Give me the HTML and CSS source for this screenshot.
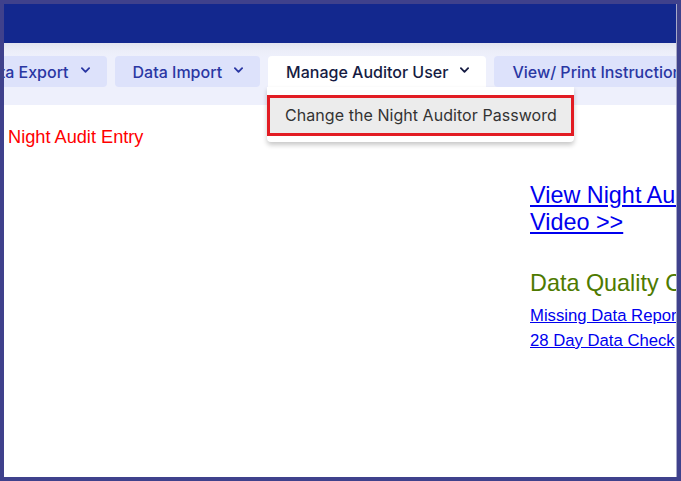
FILE: index.html
```html
<!DOCTYPE html>
<html>
<head>
<meta charset="utf-8">
<link rel="stylesheet" href="styles.css">
</head>
<body>
<div class="frame">
  <div class="page">
    <header class="topbar"></header>
    <nav class="nav">
      <div class="nav-row">
        <div class="nav-btn">Data Export <svg class="chev" viewBox="0 0 10 6"><path d="M1 1l4 4 4-4" /></svg></div>
        <div class="nav-btn">Data Import <svg class="chev" viewBox="0 0 10 6"><path d="M1 1l4 4 4-4" /></svg></div>
        <div class="nav-btn active">Manage Auditor User <svg class="chev" viewBox="0 0 10 6"><path d="M1 1l4 4 4-4" /></svg>
          <div class="dropdown">
            <div class="dd-item">Change the Night Auditor Password</div>
          </div>
        </div>
        <div class="nav-btn">View/ Print Instructions <svg class="chev" viewBox="0 0 10 6"><path d="M1 1l4 4 4-4" /></svg></div>
      </div>
    </nav>
    <main class="content">
      <div class="left">
        <div class="entry-title">Night Audit Entry</div>
      </div>
      <div class="right">
        <a class="video-link" href="#">View Night Audit Training<br>Video &gt;&gt;</a>
        <h2 class="dq-title">Data Quality Checks</h2>
        <a class="dq-link" href="#">Missing Data Report</a>
        <a class="dq-link" href="#">28 Day Data Check</a>
      </div>
    </main>
  </div>
</div>
</body>
</html>
```
FILE: styles.css
```css
html, body {
  margin: 0;
  padding: 0;
}
body {
  width: 681px;
  height: 481px;
  overflow: hidden;
  font-family: "Liberation Sans", Arial, sans-serif;
}
.frame {
  box-sizing: border-box;
  width: 681px;
  height: 481px;
  border: 4px solid #3f418c;
  background: #ffffff;
  overflow: hidden;
}
.page {
  height: 100%;
  border-right: 1px solid #a8a9c8;
  overflow: hidden;
  display: flex;
  flex-direction: column;
}
.topbar {
  height: 39px;
  flex-shrink: 0;
  background: #13288e;
}
.nav {
  height: 62px;
  flex-shrink: 0;
  background: linear-gradient(#e2e4ef 0, #eceef9 8px, #eef0fc 14px);
  position: relative;
  z-index: 2;
}
.nav-row {
  display: flex;
  gap: 8px;
  padding-top: 13px;
  margin-left: -43px;
  white-space: nowrap;
}
.nav-btn {
  position: relative;
  flex-shrink: 0;
  display: flex;
  align-items: center;
  gap: 12px;
  height: 31px;
  padding: 0 17px 0 18px;
  border-radius: 4px;
  background: #dde2fb;
  color: #2a37a3;
  font-family: Inter, "Noto Sans", sans-serif;
  font-size: 16px;
  font-weight: 500;
}
.nav-btn.active {
  background: #ffffff;
  color: #151b42;
  border-radius: 4px 4px 0 0;
}
.chev {
  width: 9px;
  height: 6px;
  fill: none;
  stroke: currentColor;
  stroke-width: 2;
  stroke-linecap: round;
  stroke-linejoin: round;
  margin-top: -3px;
}
.dropdown {
  position: absolute;
  top: 31px;
  left: -1px;
  width: 307px;
  padding: 8px 0 6px;
  background: #ffffff;
  border-radius: 0 0 4px 4px;
  box-shadow: 0 3px 5px rgba(0, 0, 0, 0.22);
}
.dd-item {
  height: 35px;
  line-height: 35px;
  padding: 0 15px;
  border: 3px solid #e21c23;
  background: #ececec;
  color: #333333;
  font-weight: 400;
  font-size: 16px;
  letter-spacing: 0.05px;
}
.content {
  flex: 1;
  display: flex;
  background: #ffffff;
}
.left {
  width: 522px;
  flex-shrink: 0;
  padding-left: 4px;
  padding-top: 22px;
}
.entry-title {
  color: #ff0000;
  font-size: 18.2px;
}
.right {
  flex-shrink: 0;
  padding-top: 77px;
  white-space: nowrap;
  display: flex;
  flex-direction: column;
  align-items: flex-start;
}
.video-link {
  color: #0000ee;
  font-size: 23.4px;
  line-height: 27px;
}
.dq-title {
  margin: 35px 0 8px;
  color: #4e7a00;
  font-size: 23.4px;
  font-weight: 400;
  line-height: 25px;
}
.dq-link {
  color: #0000ee;
  font-size: 16.7px;
  line-height: 24.5px;
}
```
